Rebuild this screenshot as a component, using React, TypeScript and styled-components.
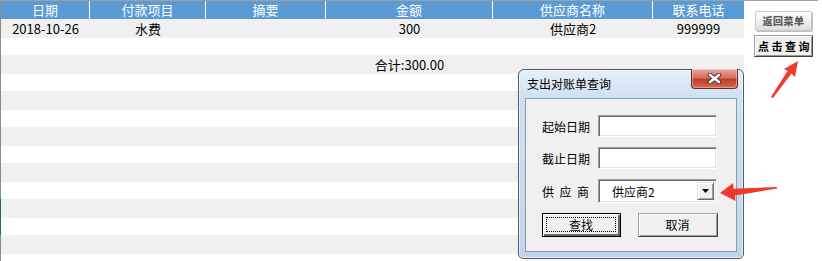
import * as React from 'react'
import styled, { createGlobalStyle } from 'styled-components'

const GlobalStyle = createGlobalStyle`
    html, body {
        margin: 0;
        padding: 0;
        background: #fff;
        overflow: hidden;
    }
    body {
        font-family: "Noto Sans CJK SC", "Microsoft YaHei", sans-serif;
    }
`

const COLS = '89px 116px 120px 167px 160px 91px'

const Screen = styled.div`
    position: relative;
    display: flex;
    width: 818px;
    height: 260px;
    border-top: 1px solid #a0a0a0;
`

const Table = styled.div`
    flex: none;
    width: 744px;
    display: flex;
    flex-direction: column;
    overflow: hidden;
`

const HeaderRow = styled.div`
    flex: none;
    display: grid;
    grid-template-columns: ${COLS};
    height: 18px;
    border-left: 1px solid #8c8c8c;
    background: #5b9bd5;
`

const HeaderCell = styled.div`
    border-right: 1px solid #fff;
    color: #fff;
    font-size: 13px;
    line-height: 18px;
    text-align: center;
    white-space: nowrap;

    &:last-child {
        border-right: none;
    }
`

const Row = styled.div<{ $alt: boolean; $mark?: boolean }>`
    flex: none;
    display: grid;
    grid-template-columns: ${COLS};
    height: ${p => (p.$alt ? 19 : 17)}px;
    line-height: ${p => (p.$alt ? 19 : 17)}px;
    background: ${p => (p.$alt ? '#f0f0f0' : '#fff')};
    border-left: 1px solid ${p => (p.$mark ? '#217346' : '#8c8c8c')};
`

const Cell = styled.div`
    font-size: 13px;
    color: #000;
    text-align: center;
    white-space: nowrap;
`

const Side = styled.div`
    display: flex;
    flex-direction: column;
    align-items: flex-start;
    gap: 4px;
    padding: 10px 0 0 11px;
`

const MenuButton = styled.div`
    box-sizing: border-box;
    width: 57px;
    height: 20px;
    border: 1px solid #c8c8c8;
    border-radius: 2px;
    background: linear-gradient(#ffffff, #f4f4f4 45%, #dcdcdc);
    box-shadow: 1px 1px 0 #bdbdbd;
    font-size: 10px;
    font-weight: bold;
    line-height: 18px;
    color: #5a5a5a;
    text-shadow: 0 0 1px #a0a0a0;
    text-align: center;
    letter-spacing: 0.5px;
`

const QueryButton = styled.div`
    box-sizing: border-box;
    width: 59px;
    height: 22px;
    margin-left: -1px;
    border: 1px solid;
    border-color: #a0a0a0 #404040 #404040 #a0a0a0;
    box-shadow: inset 1px 1px 0 #fff, inset -1px -1px 0 #9a9a9a;
    background: #f0f0f0;
    font-size: 11px;
    font-weight: bold;
    line-height: 20px;
    color: #000;
    text-align: center;
    letter-spacing: 2.5px;
    padding-left: 3px;
`

const Window = styled.div`
    position: absolute;
    left: 518px;
    top: 68px;
    box-sizing: border-box;
    width: 226px;
    height: 190px;
    display: flex;
    flex-direction: column;
    padding: 0 6px 6px;
    border: 1px solid #4d5a68;
    border-radius: 6px 6px 5px 5px;
    background: linear-gradient(#e6eff9, #cfe0f2 28px, #bfd5ed);
    box-shadow: inset 0 0 0 1px rgba(255, 255, 255, 0.6);
`

const TitleBar = styled.div`
    flex: none;
    display: flex;
    align-items: flex-start;
    height: 28px;
`

const Title = styled.div`
    padding: 6px 0 0 2px;
    font-size: 12px;
    line-height: 16px;
    color: #000;
`

const Close = styled.div`
    box-sizing: border-box;
    display: flex;
    align-items: center;
    justify-content: center;
    width: 47px;
    height: 20px;
    margin: -1px -1px 0 auto;
    border: 1px solid #6b2a22;
    border-top: none;
    border-radius: 0 0 4px 4px;
    background: linear-gradient(#e9a597, #d5705f 45%, #c23c27 55%, #d9684f);
    box-shadow: inset 0 0 0 1px rgba(255, 255, 255, 0.35);
`

const Panel = styled.div`
    flex: 1;
    border: 1px solid #8e9caa;
    background: #f0f0f0;
    padding: 16px 0 0 16px;
`

const Form = styled.div`
    display: grid;
    grid-template-rows: 22px 22px 24px 24px;
    row-gap: 10px;
`

const Field = styled.div`
    display: flex;
    align-items: center;
`

const Label = styled.div<{ $spread?: boolean }>`
    width: 56px;
    font-size: 12px;
    color: #000;
    letter-spacing: ${p => (p.$spread ? '5.5px' : '0')};
`

const Input = styled.div`
    box-sizing: border-box;
    width: 119px;
    height: 100%;
    border: 1px solid;
    border-color: #a0a0a0 #fff #fff #a0a0a0;
    box-shadow: inset 1px 1px 0 #696969, inset -1px -1px 0 #e3e3e3;
    background: #fff;
`

const Combo = styled(Input)`
    display: flex;
    align-items: center;
    justify-content: space-between;
    padding: 2px;
    font-size: 12px;
    color: #000;
`

const ComboText = styled.span`
    padding-left: 11px;
`

const DropButton = styled.div`
    box-sizing: border-box;
    display: flex;
    align-items: center;
    justify-content: center;
    width: 17px;
    height: 100%;
    border: 1px solid;
    border-color: #e3e3e3 #696969 #696969 #e3e3e3;
    box-shadow: inset 1px 1px 0 #fff, inset -1px -1px 0 #a0a0a0;
    background: #f0f0f0;
`

const Buttons = styled.div`
    display: flex;
    gap: 17px;
`

const Button = styled.div<{ $default?: boolean; $width: number }>`
    box-sizing: border-box;
    display: flex;
    width: ${p => p.$width}px;
    height: 24px;
    border: 1px solid;
    border-color: ${p => (p.$default ? '#000' : '#a0a0a0 #404040 #404040 #a0a0a0')};
    box-shadow: ${p =>
        p.$default
            ? 'inset 1px 1px 0 #fff, inset -2px -2px 0 #696969'
            : 'inset 1px 1px 0 #fff, inset -1px -1px 0 #a0a0a0'};
    background: #f0f0f0;
    font-size: 12px;
    color: #000;
`

const ButtonLabel = styled.span<{ $focus?: boolean }>`
    flex: 1;
    margin: 3px 4px 4px 3px;
    border: 1px dotted ${p => (p.$focus ? '#000' : 'transparent')};
    display: flex;
    align-items: center;
    justify-content: center;
    line-height: 14px;
`

const Overlay = styled.svg`
    position: absolute;
    left: 0;
    top: -1px;
    pointer-events: none;
`

const headers = ['日期', '付款项目', '摘要', '金额', '供应商名称', '联系电话']

const rows: string[][] = [
    ['2018-10-26', '水费', '', '300', '供应商2', '999999'],
    ['', '', '', '', '', ''],
    ['', '', '', '合计:300.00', '', ''],
]

const ROW_COUNT = 14

export default function App() {
    return (
        <>
            <GlobalStyle />
            <Screen>
                <Table>
                    <HeaderRow>
                        {headers.map(h => (
                            <HeaderCell key={h}>{h}</HeaderCell>
                        ))}
                    </HeaderRow>
                    {Array.from({ length: ROW_COUNT }).map((_, i) => (
                        <Row key={i} $alt={i % 2 === 0} $mark={i === 10 || i === 11}>
                            {(rows[i] || headers.map(() => '')).map((c, j) => (
                                <Cell key={j}>{c}</Cell>
                            ))}
                        </Row>
                    ))}
                </Table>
                <Side>
                    <MenuButton>返回菜单</MenuButton>
                    <QueryButton>点击查询</QueryButton>
                </Side>

                <Window>
                    <TitleBar>
                        <Title>支出对账单查询</Title>
                        <Close>
                            <svg width="15" height="11" viewBox="0 0 15 11">
                                <path d="M3 2 L12 9 M12 2 L3 9" stroke="#3d3d3d" strokeWidth="4.6" strokeLinecap="round" />
                                <path d="M3 2 L12 9 M12 2 L3 9" stroke="#fff" strokeWidth="2.6" strokeLinecap="round" />
                            </svg>
                        </Close>
                    </TitleBar>
                    <Panel>
                        <Form>
                            <Field>
                                <Label>起始日期</Label>
                                <Input />
                            </Field>
                            <Field>
                                <Label>截止日期</Label>
                                <Input />
                            </Field>
                            <Field>
                                <Label $spread>供应商</Label>
                                <Combo>
                                    <ComboText>供应商2</ComboText>
                                    <DropButton>
                                        <svg width="7" height="4" viewBox="0 0 7 4">
                                            <path d="M0 0 H7 L3.5 4 Z" fill="#000" />
                                        </svg>
                                    </DropButton>
                                </Combo>
                            </Field>
                            <Buttons>
                                <Button $default $width={79}>
                                    <ButtonLabel $focus>查找</ButtonLabel>
                                </Button>
                                <Button $width={80}>
                                    <ButtonLabel>取消</ButtonLabel>
                                </Button>
                            </Buttons>
                        </Form>
                    </Panel>
                </Window>

                <Overlay width="822" height="261" viewBox="0 0 822 261">
                    <polygon
                        points="798,61 795,77 791.5,73.5 773,98 771,97 787.5,71 784,69"
                        fill="#f2382b"
                    />
                    <polygon
                        points="720,193 733,183 733.5,188.8 777,187 777,188.6 735,195.5 735.5,201"
                        fill="#f2382b"
                    />
                </Overlay>
            </Screen>
        </>
    )
}
